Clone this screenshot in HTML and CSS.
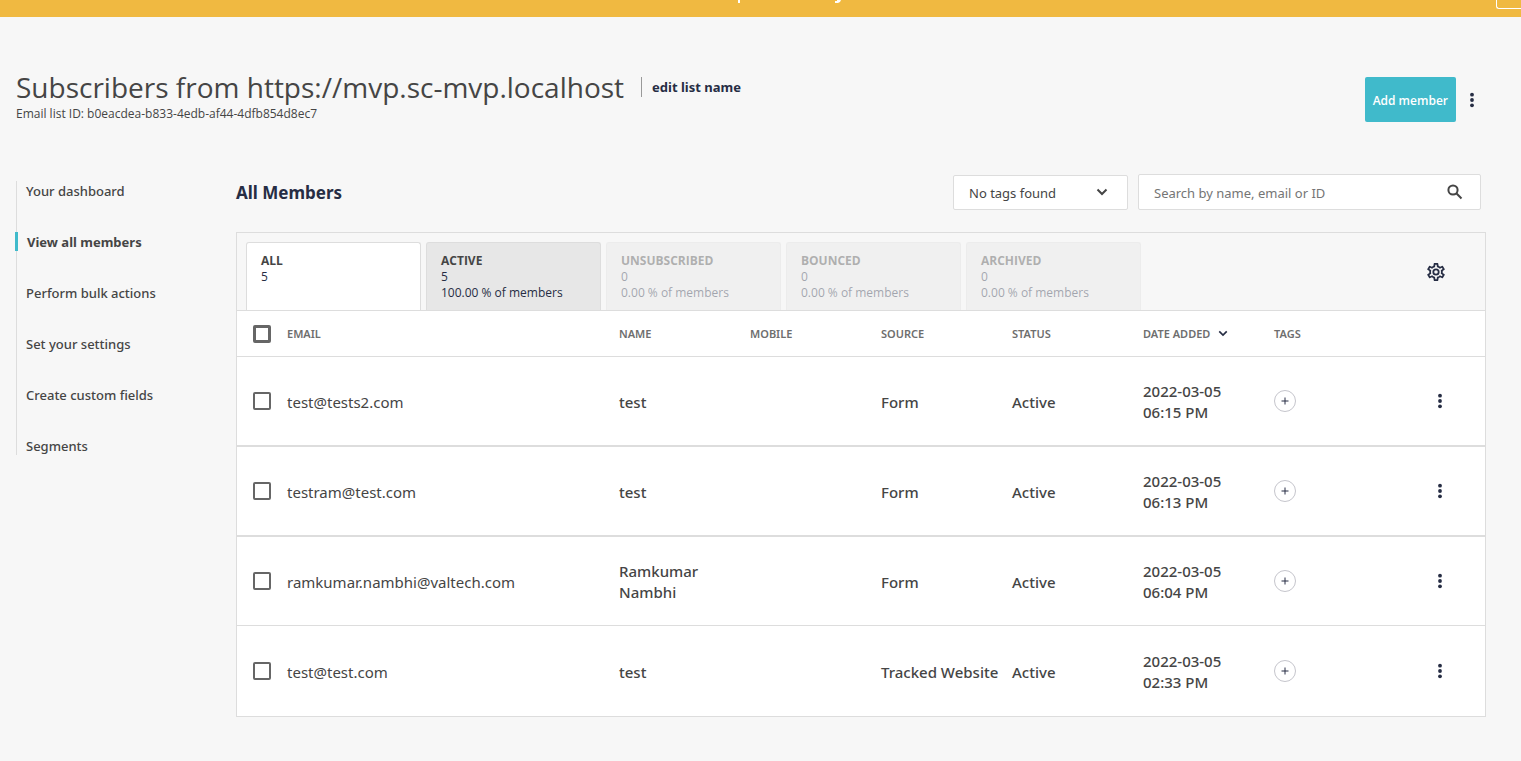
FILE: index.html
```html
<!DOCTYPE html>
<html lang="en">
<head>
<meta charset="utf-8">
<title>All Members</title>
<link rel="stylesheet" href="styles.css">
</head>
<body>
<svg class="sprite" aria-hidden="true">
  <symbol id="dots" viewBox="0 0 6 16"><circle cx="3" cy="2.7" r="1.900"/><circle cx="3" cy="8" r="1.900"/><circle cx="3" cy="13.3" r="1.900"/></symbol>
  <symbol id="chevron" viewBox="0 0 12 8"><path d="M1.5 1.5 6 6l4.500-4.500" fill="none" stroke="currentColor" stroke-width="2"/></symbol>
  <symbol id="plus" viewBox="0 0 8 8"><path d="M4 .5v7M.5 4h7" stroke="currentColor" stroke-width="1"/></symbol>
</svg>
<div class="banner">
  <svg class="banner-marks" viewBox="0 0 104 4" aria-hidden="true"><path d="M0 0h2v3H0zM99 0h4l-1 2-2 1h-3V1h2z"/></svg>
  <button class="banner-button" type="button" aria-label="Dismiss"></button>
</div>
<header class="page-head">
  <div>
    <div class="title-row">
      <h1 class="title">Subscribers from https://mvp.sc-mvp.localhost</h1>
      <a class="edit-link" href="#">edit list name</a>
    </div>
    <p class="list-id">Email list ID: b0eacdea-b833-4edb-af44-4dfb854d8ec7</p>
  </div>
  <div class="head-actions">
    <button class="add-button" type="button">Add member</button>
    <button class="dots-button" type="button" aria-label="List options"><svg class="dots"><use href="#dots"/></svg></button>
  </div>
</header>
<div class="layout">
  <nav class="side-nav">
    <a class="nav-link" href="#">Your dashboard</a>
    <a class="nav-link nav-current" href="#">View all members</a>
    <a class="nav-link" href="#">Perform bulk actions</a>
    <a class="nav-link" href="#">Set your settings</a>
    <a class="nav-link" href="#">Create custom fields</a>
    <a class="nav-link" href="#">Segments</a>
  </nav>
  <main class="main">
    <div class="toolbar">
      <h2 class="section-title">All Members</h2>
      <div class="filter">
        <select class="tag-select" aria-label="Tags"><option>No tags found</option></select>
        <svg class="filter-chevron"><use href="#chevron"/></svg>
      </div>
      <form class="search">
        <input class="search-input" type="search" aria-label="Search members" placeholder="Search by name, email or ID">
        <button class="search-button" type="submit" aria-label="Search"><svg class="search-icon" viewBox="0 0 16 16"><circle cx="6" cy="6" r="4.600"/><path d="m9.300 9.300 5.200 5.200"/></svg></button>
      </form>
    </div>
    <section class="panel">
      <div class="tabs">
        <button class="tab tab-selected" type="button"><b class="tab-name">ALL</b><span>5</span></button>
        <button class="tab" type="button"><b class="tab-name">ACTIVE</b><span>5</span><span>100.00 % of members</span></button>
        <button class="tab tab-empty" type="button"><b class="tab-name">UNSUBSCRIBED</b><span>0</span><span>0.00 % of members</span></button>
        <button class="tab tab-empty" type="button"><b class="tab-name">BOUNCED</b><span>0</span><span>0.00 % of members</span></button>
        <button class="tab tab-empty" type="button"><b class="tab-name">ARCHIVED</b><span>0</span><span>0.00 % of members</span></button>
        <button class="gear-button" type="button" aria-label="Column settings"><svg class="gear" viewBox="2 2 20 20"><path d="M19.430 12.980c.04-.32.070-.64.070-.98s-.03-.66-.07-.98l2.110-1.650c.19-.15.240-.42.120-.64l-2-3.460a.5.5 0 0 0-.61-.22l-2.490 1c-.52-.4-1.080-.73-1.690-.98l-.38-2.650A.49.490 0 0 0 14 2h-4a.49.490 0 0 0-.49.420l-.38 2.650c-.61.250-1.170.590-1.690.980l-2.490-1a.5.500 0 0 0-.61.220l-2 3.460c-.13.220-.07.490.120.640l2.110 1.650c-.04.320-.07.650-.07.980s.03.660.070.980l-2.110 1.650a.5.500 0 0 0-.12.640l2 3.460c.12.220.390.300.610.220l2.490-1c.52.400 1.080.730 1.690.980l.38 2.650c.03.240.240.420.490.420h4c.25 0 .46-.18.490-.42l.38-2.650c.61-.25 1.170-.59 1.690-.98l2.490 1c.23.090.490 0 .61-.22l2-3.460a.5.500 0 0 0-.12-.64zM17.450 11.270c.04.310.050.520.050.730s-.02.430-.05.730l-.14 1.130.89.700 1.080.840-.7 1.210-1.270-.51-1.040-.42-.9.680c-.43.320-.84.560-1.250.730l-1.060.430-.16 1.130-.2 1.350h-1.400l-.35-2.480-1.060-.43c-.43-.18-.83-.41-1.230-.71l-.91-.7-1.060.43-1.270.510-.7-1.210 1.970-1.540-.14-1.130a6 6 0 0 1 0-1.480l.14-1.130-1.970-1.540.7-1.210 2.310.94.900-.69c.43-.32.840-.56 1.250-.73l1.060-.43.350-2.480h1.400l.35 2.480 1.060.430c.43.180.830.410 1.230.710l.91.700 2.330-.94.700 1.210-1.960 1.540zM12 8a4 4 0 1 0 0 8 4 4 0 0 0 0-8zm0 6a2 2 0 1 1 0-4 2 2 0 0 1 0 4z"/></svg></button>
      </div>
      <table class="members">
        <colgroup><col class="col-check"><col><col class="col-data"><col class="col-data"><col class="col-data"><col class="col-data"><col class="col-data"><col class="col-data"><col class="col-menu"></colgroup>
        <thead>
          <tr><th class="check-cell"><input class="check check-all" type="checkbox" aria-label="Select all"></th><th>EMAIL</th><th>NAME</th><th>MOBILE</th><th>SOURCE</th><th>STATUS</th><th><button class="sort" type="button">DATE ADDED <svg class="sort-chevron"><use href="#chevron"/></svg></button></th><th>TAGS</th><th></th></tr>
        </thead>
        <tbody>
          <tr><td class="check-cell"><input class="check" type="checkbox" aria-label="Select test@tests2.com"></td><td class="email">test@tests2.com</td><td>test</td><td></td><td>Form</td><td>Active</td><td>2022-03-05<br>06:15 PM</td><td class="tag-cell"><button class="add-tag" type="button" aria-label="Add tag"><svg class="plus"><use href="#plus"/></svg></button></td><td class="menu-cell"><button class="dots-button" type="button" aria-label="Member options"><svg class="dots"><use href="#dots"/></svg></button></td></tr>
          <tr><td class="check-cell"><input class="check" type="checkbox" aria-label="Select testram@test.com"></td><td class="email">testram@test.com</td><td>test</td><td></td><td>Form</td><td>Active</td><td>2022-03-05<br>06:13 PM</td><td class="tag-cell"><button class="add-tag" type="button" aria-label="Add tag"><svg class="plus"><use href="#plus"/></svg></button></td><td class="menu-cell"><button class="dots-button" type="button" aria-label="Member options"><svg class="dots"><use href="#dots"/></svg></button></td></tr>
          <tr class="thin"><td class="check-cell"><input class="check" type="checkbox" aria-label="Select ramkumar.nambhi@valtech.com"></td><td class="email">ramkumar.nambhi@valtech.com</td><td>Ramkumar<br>Nambhi</td><td></td><td>Form</td><td>Active</td><td>2022-03-05<br>06:04 PM</td><td class="tag-cell"><button class="add-tag" type="button" aria-label="Add tag"><svg class="plus"><use href="#plus"/></svg></button></td><td class="menu-cell"><button class="dots-button" type="button" aria-label="Member options"><svg class="dots"><use href="#dots"/></svg></button></td></tr>
          <tr class="last"><td class="check-cell"><input class="check" type="checkbox" aria-label="Select test@test.com"></td><td class="email">test@test.com</td><td>test</td><td></td><td>Tracked Website</td><td>Active</td><td>2022-03-05<br>02:33 PM</td><td class="tag-cell"><button class="add-tag" type="button" aria-label="Add tag"><svg class="plus"><use href="#plus"/></svg></button></td><td class="menu-cell"><button class="dots-button" type="button" aria-label="Member options"><svg class="dots"><use href="#dots"/></svg></button></td></tr>
        </tbody>
      </table>
    </section>
  </main>
</div>
</body>
</html>
```
FILE: styles.css
```css
* { box-sizing: border-box; }
body { margin: 0; background: #f7f7f7; color: #454545; font-family: "Noto Sans", "Open Sans", sans-serif; font-size: 14px; font-weight: 500; }
button, input, select { font: inherit; color: inherit; }
button { border: 0; padding: 0; background: none; cursor: pointer; }
h1, h2, p { margin: 0; }
.sprite { position: absolute; width: 0; height: 0; }

.banner { display: flex; justify-content: space-between; height: 17px; padding-left: 84px; background: #f0b941; overflow: hidden; }
.banner-marks { width: 104px; height: 4px; margin: 0 auto; fill: #fff; }
.banner-button { width: 25px; height: 9px; border: 1px solid #fff; border-top: 0; border-right: 0; border-radius: 0 0 0 3px; }

.page-head { display: flex; justify-content: space-between; padding: 52px 43px 0 16px; }
.title-row { display: flex; align-items: center; gap: 17px; }
.title { font-family: "Open Sans", "Noto Sans", sans-serif; font-size: 28px; line-height: 36px; font-weight: 500; }
.edit-link { border-left: 1px solid #999; padding-left: 10px; color: #262d44; font-size: 13px; line-height: 20px; font-weight: 700; text-decoration: none; }
.list-id { font-family: "Open Sans", "Noto Sans", sans-serif; font-size: 12px; line-height: 18px; }
.head-actions { display: flex; align-items: flex-start; gap: 10px; padding-top: 8px; }
.add-button { height: 45px; padding: 2px 8px 0; border-radius: 2px; background: #40bacb; color: #fff; font-family: "Open Sans", "Noto Sans", sans-serif; font-size: 12px; font-weight: 600; }
.dots-button { display: inline-flex; color: #262d44; padding: 0 3px; }
.dots { width: 6px; height: 16px; fill: currentColor; }
.head-actions .dots-button { padding-top: 15px; }

.layout { display: flex; padding: 51px 35px 44px 16px; }
.side-nav { flex: 0 0 220px; display: flex; flex-direction: column; align-items: flex-start; align-self: flex-start; gap: 32px; margin-top: 7px; border-left: 1px solid #ddd; }
.nav-link { padding: 1px 9px 0; color: inherit; font-size: 13px; line-height: 18px; text-decoration: none; }
.nav-current { margin-left: -2px; border-left: 3px solid #40bacb; font-weight: 700; }
.main { flex: 1; min-width: 0; }

.toolbar { display: flex; align-items: center; gap: 10px; padding-right: 5px; margin-bottom: 22px; }
.section-title { flex: 1; padding-top: 2px; color: #262d44; font-size: 17px; line-height: 34px; font-weight: 700; }
.filter { position: relative; flex: 0 0 175px; align-self: flex-end; }
.tag-select { display: block; appearance: none; width: 100%; height: 35px; padding: 1px 15px 0; border: 1px solid #ddd; border-radius: 2px; background: #fff; font-size: 13px; font-weight: 400; }
.filter-chevron { position: absolute; right: 20px; top: 13px; width: 12px; height: 8px; pointer-events: none; }
.search { flex: 0 0 343px; display: flex; align-items: center; height: 36px; border: 1px solid #ddd; border-radius: 2px; background: #fff; }
.search-input { flex: 1; min-width: 0; padding: 2px 15px 0; border: 0; background: none; font-size: 13px; font-weight: 400; outline: 0; }
.search-input::placeholder { color: #757575; }
.search-button { display: flex; padding: 0 17px; }
.search-icon { width: 16px; height: 16px; fill: none; stroke: #454545; stroke-width: 2; }

.panel { border: 1px solid #ddd; }
.tabs { display: flex; gap: 5px; padding: 9px 40px 0 9px; border-bottom: 1px solid #ddd; }
.tab { flex: 0 0 175px; display: flex; flex-direction: column; align-items: flex-start; height: 68px; padding: 10px 14px; border: 1px solid #ddd; border-bottom: 0; border-radius: 3px 3px 0 0; background: #e7e7e7; color: #262d44; font-family: "Open Sans", "Noto Sans", sans-serif; font-size: 12px; line-height: 16px; }
.tab-name { color: #454545; font-weight: 700; }
.tab-selected { background: #fff; }
.tab-empty { opacity: .4; }
.gear-button { display: flex; align-self: center; margin-left: auto; margin-top: -9px; }
.gear { width: 18px; height: 18px; fill: #262d44; }

.members { width: 100%; table-layout: fixed; border-collapse: separate; border-spacing: 0; background: #fff; }
.col-check { width: 50px; }
.col-data { width: 131px; }
.col-menu { width: 80px; }
th, td { padding: 0; text-align: left; }
th { height: 46px; border-bottom: 1px solid #ddd; color: #6e6e6e; font-size: 11px; font-weight: 600; }
td { height: 90px; padding-top: 2px; border-bottom: 2px solid #ddd; font-size: 15px; line-height: 21px; white-space: nowrap; }
.thin td { height: 89px; border-bottom-width: 1px; }
.last td { border-bottom: 0; }
.email { font-weight: 400; }
.check-cell { line-height: 0; padding: 0 0 0 16px; }
.check { appearance: none; display: block; width: 18px; height: 18px; margin: 0; border: 2px solid #666; border-radius: 2px; background: #fff; }
.check-all { border-width: 3px; }
.sort { display: flex; align-items: center; gap: 8px; }
.sort-chevron { width: 10px; height: 7px; color: #262d44; }
.tag-cell { padding: 0; }
.add-tag { display: flex; align-items: center; justify-content: center; width: 22px; height: 22px; border: 1px solid #c5c5cc; border-radius: 50%; color: #262d44; }
.plus { width: 8px; height: 8px; }
.menu-cell { padding: 0 0 0 29px; line-height: 0; }
```
